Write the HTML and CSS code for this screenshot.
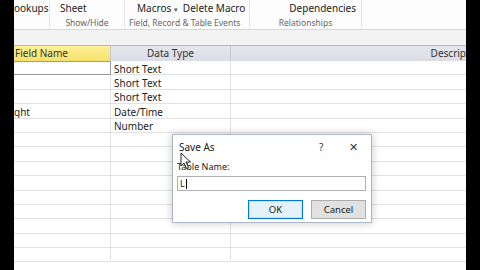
FILE: index.html
```html
<!DOCTYPE html>
<html>
<head>
<meta charset="utf-8">
<link rel="stylesheet" href="styles.css">
</head>
<body>
<div class="screen">
  <div class="edge"></div>
  <div class="main">
    <div class="ribbon">
      <div class="group g1">
        <div class="cmds"><span class="cmd">ookups</span></div>
        <div class="glabel"></div>
      </div>
      <div class="group g2">
        <div class="cmds"><span class="cmd">Sheet</span></div>
        <div class="glabel">Show/Hide</div>
      </div>
      <div class="group g3">
        <div class="cmds"><span class="cmd">Macros <span class="caret">▾</span></span><span class="cmd">Delete Macro</span></div>
        <div class="glabel">Field, Record &amp; Table Events</div>
      </div>
      <div class="group g4">
        <div class="cmds"><span class="cmd">Dependencies</span></div>
        <div class="glabel">Relationships</div>
      </div>
      <div class="group g5"></div>
    </div>
    <div class="band"></div>
    <div class="grid">
      <div class="hrow">
        <div class="hc c1 hl">Field Name</div>
        <div class="hc c2">Data Type</div>
        <div class="hc c3">Descrip</div>
      </div>
      <div class="row"><div class="c c1 sel"></div><div class="c c2">Short Text</div><div class="c c3"></div></div>
      <div class="row"><div class="c c1"></div><div class="c c2">Short Text</div><div class="c c3"></div></div>
      <div class="row"><div class="c c1"></div><div class="c c2">Short Text</div><div class="c c3"></div></div>
      <div class="row"><div class="c c1 cut">ght</div><div class="c c2">Date/Time</div><div class="c c3"></div></div>
      <div class="row"><div class="c c1"></div><div class="c c2">Number</div><div class="c c3"></div></div>
      <div class="row"><div class="c c1"></div><div class="c c2"></div><div class="c c3"></div></div>
      <div class="row"><div class="c c1"></div><div class="c c2"></div><div class="c c3"></div></div>
      <div class="row"><div class="c c1"></div><div class="c c2"></div><div class="c c3"></div></div>
      <div class="row"><div class="c c1"></div><div class="c c2"></div><div class="c c3"></div></div>
      <div class="row"><div class="c c1"></div><div class="c c2"></div><div class="c c3"></div></div>
      <div class="row"><div class="c c1"></div><div class="c c2"></div><div class="c c3"></div></div>
      <div class="row"><div class="c c1"></div><div class="c c2"></div><div class="c c3"></div></div>
      <div class="row"><div class="c c1"></div><div class="c c2"></div><div class="c c3"></div></div>
      <div class="row"><div class="c c1"></div><div class="c c2"></div><div class="c c3"></div></div>
    </div>
  </div>
  <div class="edge"></div>

  <div class="dialog">
    <div class="dtitle">
      <span class="ttext">Save As</span>
      <span class="help">?</span>
      <span class="close">✕</span>
    </div>
    <div class="dbody">
      <div class="lbl">Table Name:</div>
      <div class="input">L<span class="caretbar"></span></div>
      <div class="btns">
        <div class="btn ok">OK</div>
        <div class="btn">Cancel</div>
      </div>
    </div>
  </div>
  <svg class="cursor" width="12" height="18" viewBox="0 0 12 18">
    <path d="M1 1 L1 14 L4 11 L6.5 16.5 L8.5 15.5 L6 10 L10.5 10 Z" fill="#fff" stroke="#222" stroke-width="1"/>
  </svg>
</div>
</body>
</html>
```

FILE: styles.css
```css
* { box-sizing: border-box; }
html, body { margin: 0; padding: 0; }
body {
  width: 480px; height: 270px; overflow: hidden;
  font-family: "Noto Sans", "Open Sans", sans-serif;
  color: #222;
}
.screen { position: relative; display: flex; width: 480px; height: 270px; background: #000; }
.edge { width: 14px; flex: none; background: #000; }
.main { width: 452px; flex: none; background: #fff; display: flex; flex-direction: column; overflow: hidden; }

.ribbon {
  height: 30px; flex: none; display: flex; background: #fdfdfd;
  border-bottom: 1px solid #d8d8d8;
}
.group { display: flex; flex-direction: column; border-right: 1px solid #e6e6e6; flex: none; }
.g1 { width: 36px; }
.g2 { width: 75px; }
.g3 { width: 125px; }
.g4 { width: 112px; }
.g5 { flex: 1; border-right: none; }
.cmds { height: 17px; display: flex; gap: 5px; font-size: 10px; line-height: 17px; white-space: nowrap; }
.cmd { white-space: nowrap; flex: none; }
.g2 .cmds { padding-left: 10px; }
.g3 .cmds { padding-left: 12px; }
.g4 .cmds { justify-content: flex-end; padding-right: 5px; }
.caret { font-size: 7px; color: #555; }
.glabel { font-size: 8.5px; color: #666; line-height: 11px; text-align: center; white-space: nowrap; }
.g3 .glabel { text-align: left; padding-left: 4px; }

.band { height: 16px; flex: none; background: #f3f3f3; border-bottom: 1px solid #b8b8c4; }

.grid { display: flex; flex-direction: column; }
.hrow { display: flex; height: 15px; flex: none; }
.hc {
  font-size: 10px; line-height: 15px; text-align: center; color: #333;
  background: linear-gradient(#e6e6ee, #dcdce6);
  border-right: 1px solid #c8c8d0;
}
.hc.hl { background: linear-gradient(#fdf09a, #f7e26a); text-align: left; padding-left: 1px; color: #333; }
.hc.c3 { text-align: right; border-right: none; overflow: hidden; white-space: nowrap; }
.c1 { width: 97px; flex: none; }
.c2 { width: 120px; flex: none; }
.c3 { flex: 1; }
.row { display: flex; height: 14.4px; flex: none; }
.c {
  font-size: 10px; line-height: 13.4px; padding: 1.5px 0 0 3px; color: #222;
  border-bottom: 1px solid #e2e2e2; border-right: 1px solid #e2e2e2;
  white-space: nowrap; overflow: hidden;
}
.c.c3 { border-right: none; }
.c.cut { padding-left: 0; }
.c.sel { border: 1px solid #9a9a9a; border-left: none; }

.dialog {
  position: absolute; left: 172px; top: 134px; width: 200px; height: 89px;
  background: #fff; border: 1px solid #a9b7c6;
  box-shadow: 0 0 8px rgba(0,0,0,0.22);
  display: flex; flex-direction: column;
}
.dtitle { height: 23px; display: flex; align-items: center; font-size: 10px; padding-left: 6px; }
.ttext { flex: 1; color: #222; }
.help { width: 30px; font-size: 10px; color: #333; }
.close { width: 22px; font-size: 11px; color: #333; }
.dbody { padding: 3px 5px 0 4px; display: flex; flex-direction: column; }
.lbl { font-size: 9px; line-height: 12px; color: #222; }
.input {
  margin-top: 3px; height: 15px; border: 1px solid #b0b0b0; font-size: 9px;
  line-height: 13px; padding-left: 2px; display: flex; align-items: center;
}
.caretbar { width: 1px; height: 10px; background: #000; margin-left: 1px; }
.btns { display: flex; justify-content: flex-end; gap: 8px; margin-top: 9px; }
.btn {
  width: 55px; height: 19px; border: 1px solid #adadad; background: #e1e1e1;
  font-size: 9.5px; line-height: 17px; text-align: center; color: #222;
}
.btn.ok { border: 1px solid #0078d7; background: #e5f1fb; box-shadow: inset 0 0 0 1px #cce4f7; }
.cursor { position: absolute; left: 180px; top: 152px; }
```
